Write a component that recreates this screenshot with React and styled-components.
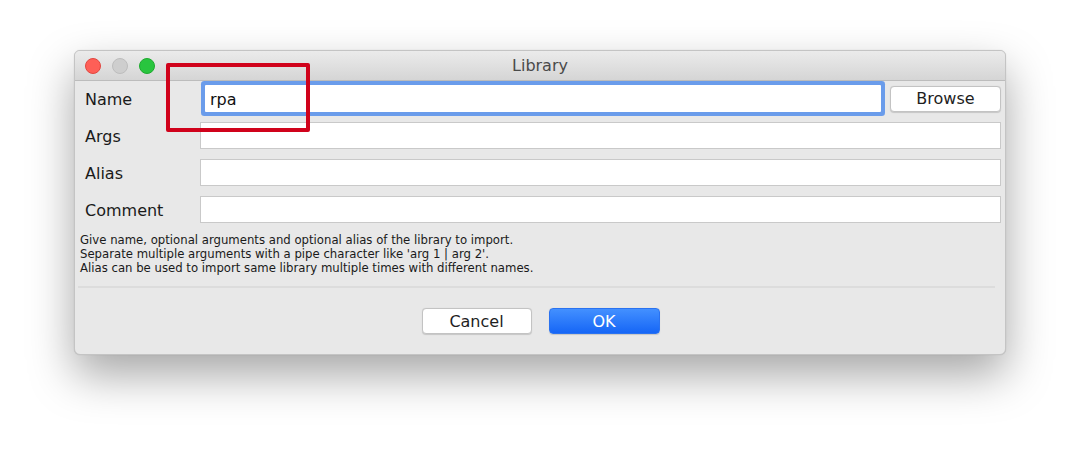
import React from 'react';
import styled, { createGlobalStyle } from 'styled-components';

const GlobalStyle = createGlobalStyle`
  html, body {
    margin: 0;
    padding: 0;
    background: #ffffff;
  }
  body {
    font-family: "DejaVu Sans", "Liberation Sans", sans-serif;
    color: #1e1e1e;
  }
`;

const Page = styled.div`
  width: 1080px;
  height: 454px;
  padding: 50px 0 0 74px;
  box-sizing: border-box;
`;

const Window = styled.div`
  position: relative;
  width: 932px;
  height: 305px;
  box-sizing: border-box;
  background: #e8e8e8;
  border: 1px solid #c4c4c4;
  border-radius: 6px;
  box-shadow: 0 20px 45px rgba(0, 0, 0, 0.35), 0 0 1px rgba(0, 0, 0, 0.2);
  display: flex;
  flex-direction: column;
`;

const TitleBar = styled.div`
  position: relative;
  height: 29px;
  flex: none;
  display: flex;
  align-items: center;
  justify-content: center;
  background: linear-gradient(#ebebeb, #d5d5d5);
  border-bottom: 1px solid #bcbcbc;
  border-radius: 5px 5px 0 0;
`;

const Lights = styled.div`
  position: absolute;
  left: 10px;
  top: 7px;
  display: flex;
  gap: 11px;
`;

const Light = styled.span`
  width: 16px;
  height: 16px;
  border-radius: 50%;
  box-sizing: border-box;
  background: ${p => p.color};
  border: 1px solid ${p => p.edge};
`;

const Title = styled.div`
  font-size: 16px;
  color: #4a4a4a;
`;

const Body = styled.div`
  flex: 1;
  display: flex;
  flex-direction: column;
  padding: 4px 4px 20px 10px;
`;

const Form = styled.div`
  display: grid;
  grid-template-columns: 115px 1fr;
  grid-auto-rows: 27px;
  row-gap: 10px;
  align-items: center;
`;

const Label = styled.label`
  font-size: 16px;
  color: #1a1a1a;
  padding-top: 2px;
`;

const Field = styled.div`
  height: 27px;
  box-sizing: border-box;
  background: #ffffff;
  border: 1px solid #c9c9c9;
`;

const NameRow = styled.div`
  display: flex;
  align-items: center;
  height: 27px;
`;

const FocusField = styled.div`
  flex: 1;
  height: 27px;
  margin: 0 4px 0 5px;
  box-sizing: border-box;
  background: #ffffff;
  border-radius: 1px;
  box-shadow: 0 0 0 4px #6a9ceb;
  display: flex;
  align-items: center;
  padding: 2px 0 0 5px;
  font-size: 16px;
  color: #111;
`;

const Button = styled.button`
  width: ${p => p.w || 110}px;
  height: 26px;
  box-sizing: border-box;
  margin: 0;
  padding: 0;
  font-family: "DejaVu Sans", "Liberation Sans", sans-serif;
  font-size: 16px;
  border-radius: 4px;
  color: ${p => (p.primary ? '#ffffff' : '#1e1e1e')};
  background: ${p => (p.primary ? 'linear-gradient(#4390ff, #1666f6)' : '#ffffff')};
  border: 1px solid ${p => (p.primary ? '#2a72f0' : '#c3c3c3')};
  box-shadow: 0 0.5px 1px rgba(0, 0, 0, 0.15);
`;

const BrowseButton = styled(Button)`
  margin-left: 5px;
`;

const Help = styled.div`
  margin: 10px 0 0 -5px;
  font-size: 11.7px;
  line-height: 14px;
  color: #1a1a1a;
`;

const Separator = styled.div`
  height: 2px;
  background: #dcdcdc;
  margin: 11px 6px 0 -7px;
`;

const Actions = styled.div`
  margin-top: auto;
  display: flex;
  justify-content: center;
  gap: 17px;
  padding-right: 5px;
`;

const Highlight = styled.div`
  position: absolute;
  left: 91px;
  top: 12px;
  width: 144px;
  height: 69px;
  box-sizing: border-box;
  border: 4.5px solid #d0021b;
  border-radius: 2px;
  pointer-events: none;
`;

const App = () => {
  return (
    <>
      <GlobalStyle />
      <Page>
        <Window>
          <TitleBar>
            <Lights>
              <Light color="#fe5f57" edge="#e2463f" />
              <Light color="#cecece" edge="#bdbdbd" />
              <Light color="#29c53f" edge="#1eaa2f" />
            </Lights>
            <Title>Library</Title>
          </TitleBar>
          <Body>
            <Form>
              <Label>Name</Label>
              <NameRow>
                <FocusField>rpa</FocusField>
                <BrowseButton w={111}>Browse</BrowseButton>
              </NameRow>
              <Label>Args</Label>
              <Field />
              <Label>Alias</Label>
              <Field />
              <Label>Comment</Label>
              <Field />
            </Form>
            <Help>
              Give name, optional arguments and optional alias of the library to import.<br />
              Separate multiple arguments with a pipe character like 'arg 1 | arg 2'.<br />
              Alias can be used to import same library multiple times with different names.
            </Help>
            <Separator />
            <Actions>
              <Button>Cancel</Button>
              <Button primary w={111}>OK</Button>
            </Actions>
          </Body>
          <Highlight />
        </Window>
      </Page>
    </>
  );
};

export default App;
